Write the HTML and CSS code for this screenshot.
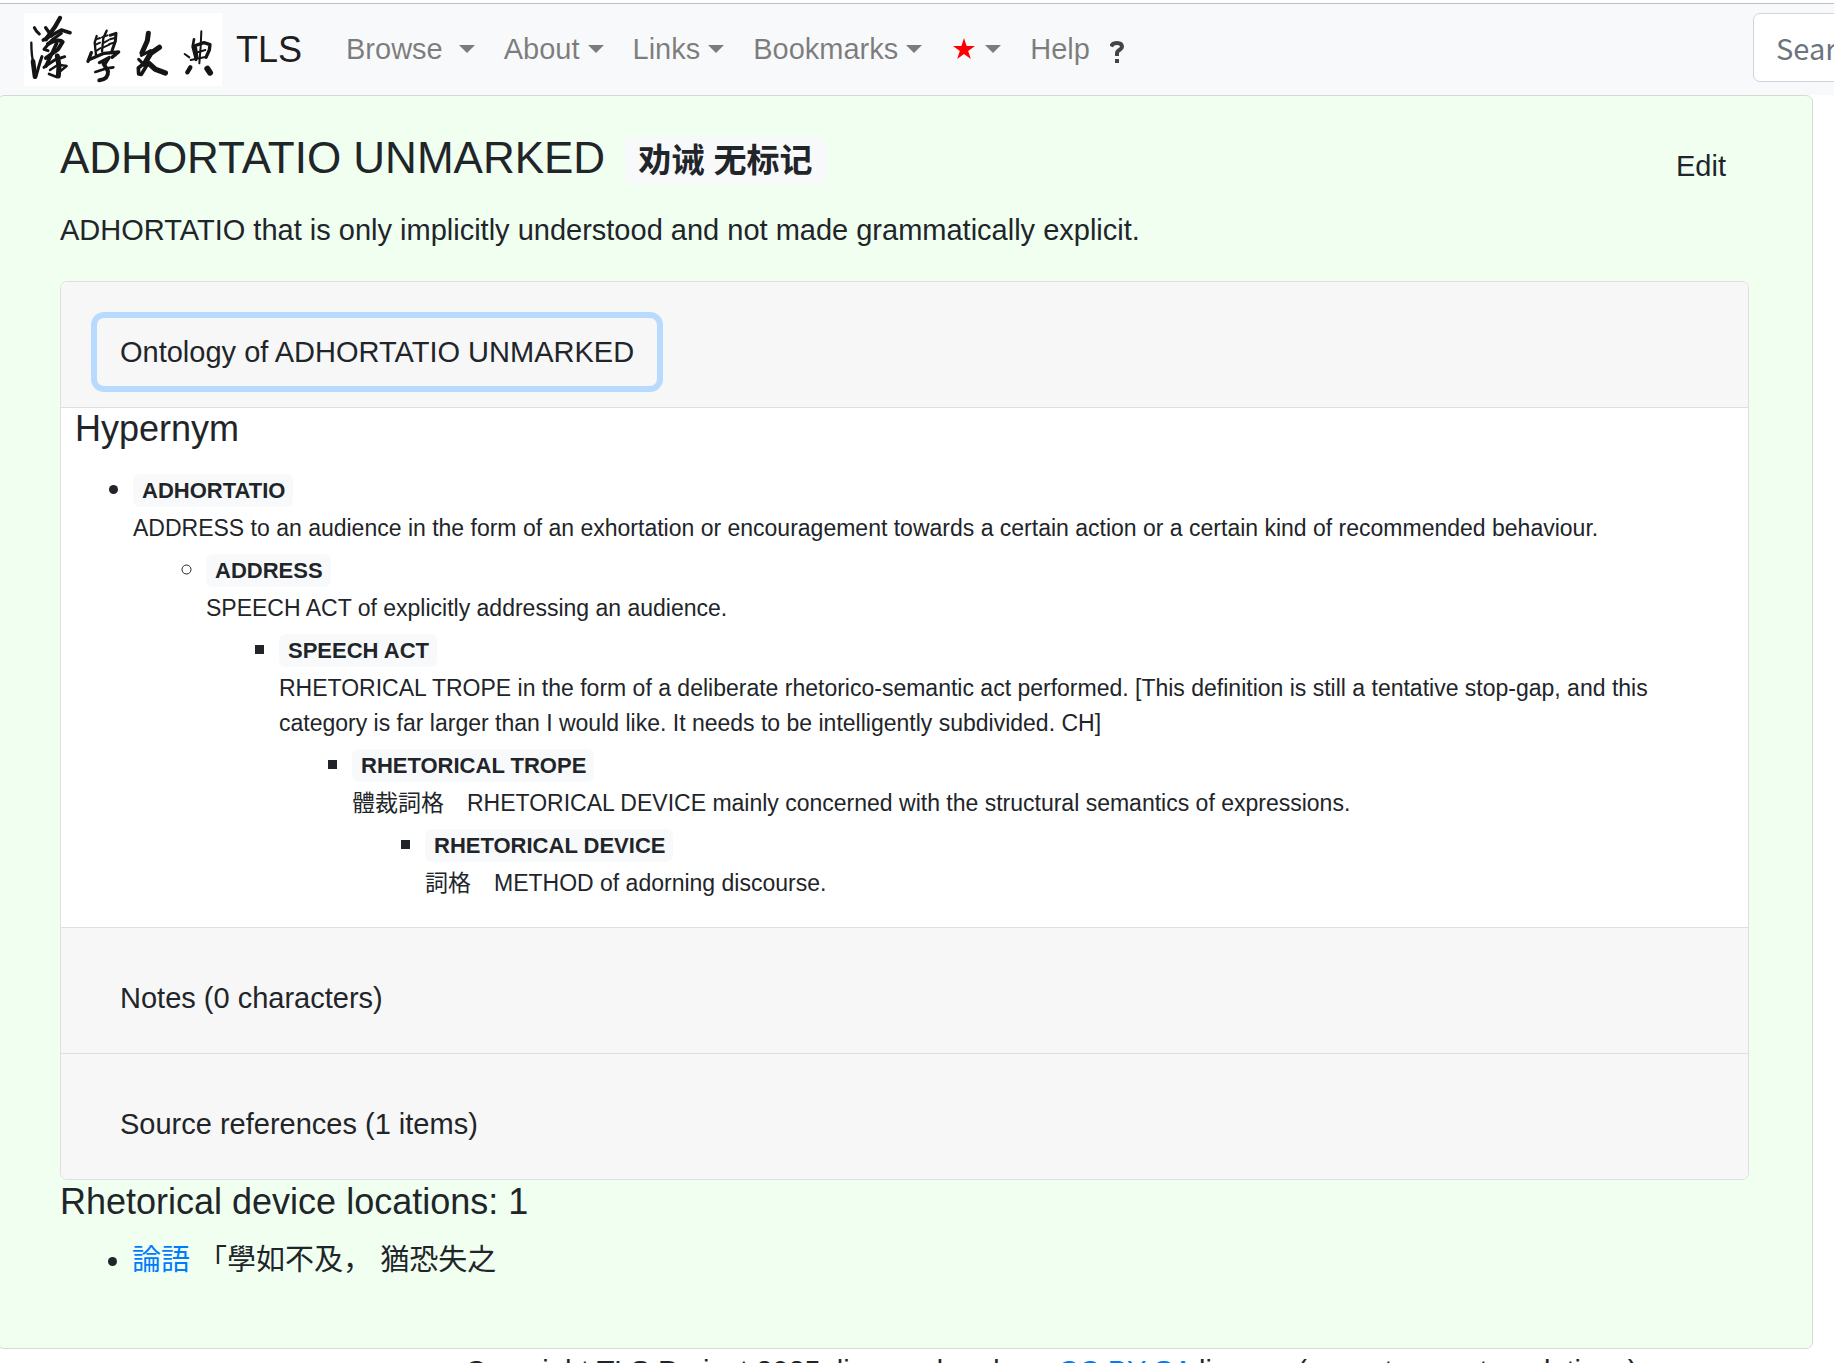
FILE: index.html
```
<!DOCTYPE html>
<html lang="en">
<head>
    <meta charset="UTF-8">
    <meta name="viewport" content="width=device-width, initial-scale=1.0">
    <title>TLS - ADHORTATIO UNMARKED</title>
    <link rel="stylesheet" href="styles.css">
</head>
<body>
    <nav class="navbar">
        <a class="navbar-brand" href="#">
            <svg class="logo" viewBox="0 0 594 219" role="img" aria-label="TLS logo">
                <rect width="594" height="219" fill="#fff"/>
                <g transform="translate(0 -9)" fill="none" stroke="#151515" stroke-linecap="round" stroke-linejoin="round">
                    <!-- first figure -->
                    <path stroke-width="9" d="M31 53L38 64L46 72"/>
                    <path stroke-width="7" d="M22 98C22 120 24 145 29 160"/>
                    <path stroke-width="14" d="M27 154L33 200"/>
                    <path stroke-width="9" d="M35 202C42 180 46 160 54 140"/>
                    <path stroke-width="10" d="M65 53L83 78"/>
                    <path stroke-width="13" d="M108 24L92 52L66 88"/>
                    <path stroke-width="11" d="M58 90L90 72L112 60L138 68"/>
                    <path stroke-width="9" d="M112 70L84 90L60 118L72 122"/>
                    <path stroke-width="12" d="M72 102C90 90 110 88 116 96L102 118L66 144"/>
                    <path stroke-width="11" d="M98 100L84 130L66 168"/>
                    <path stroke-width="9" d="M60 172L92 150L122 140"/>
                    <path stroke-width="15" d="M100 138L105 168L103 198"/>
                    <path stroke-width="8" d="M75 192L98 201"/>
                    <path stroke-width="7" d="M78 180L102 164L128 168L106 186"/>
                    <!-- second figure -->
                    <path stroke-width="7" d="M218 78L212 98L216 136"/>
                    <path stroke-width="6" d="M216 88L228 84M215 104L228 98M218 122L230 114"/>
                    <path stroke-width="7" d="M248 62L238 84L234 124"/>
                    <path stroke-width="6" d="M234 82L250 76M240 98L254 90M238 112L256 104"/>
                    <path stroke-width="9" d="M258 76L276 70L274 94L264 122"/>
                    <path stroke-width="6" d="M258 88L272 84M256 102L270 98"/>
                    <path stroke-width="10" d="M202 128L192 154"/>
                    <path stroke-width="10" d="M198 148L240 130L284 126L264 142"/>
                    <path stroke-width="9" d="M226 158L256 142L242 164"/>
                    <path stroke-width="12" d="M238 160L252 184C253 200 246 208 226 211"/>
                    <path stroke-width="8" d="M214 186L244 176L268 172"/>
                    <!-- third figure -->
                    <path stroke-width="15" d="M373 70L370 92L354 128"/>
                    <path stroke-width="9" d="M352 136L380 122"/>
                    <path stroke-width="16" d="M406 112L380 130L361 162"/>
                    <path stroke-width="11" d="M360 160L343 174L344 192L352 193L372 160"/>
                    <path stroke-width="16" d="M374 160L394 178L424 189"/>
                    <path stroke-width="9" d="M344 148L362 166"/>
                    <!-- fourth figure -->
                    <path stroke-width="6" d="M532 64L530 110L526 160"/>
                    <path stroke-width="8" d="M510 88L506 110L516 150"/>
                    <path stroke-width="11" d="M514 114L518 142"/>
                    <path stroke-width="10" d="M510 108L540 98L558 104L556 120L546 142"/>
                    <path stroke-width="6" d="M516 128L544 120M482 132L496 142M500 150L548 140"/>
                    <path stroke-width="13" d="M499 172L490 187"/>
                    <path stroke-width="18" d="M550 176L558 188"/>
                </g>
            </svg>
            <span>TLS</span>
        </a>
        <ul class="navbar-nav">
            <li><a class="nav-link dropdown-toggle wide" href="#">Browse</a></li>
            <li><a class="nav-link dropdown-toggle" href="#">About</a></li>
            <li><a class="nav-link dropdown-toggle" href="#">Links</a></li>
            <li><a class="nav-link dropdown-toggle" href="#">Bookmarks</a></li>
            <li>
                <a class="nav-link dropdown-toggle" href="#" aria-label="Starred">
                    <svg class="star" viewBox="0 0 22 21"><path fill="#f00" d="M11 0L13.6 8H22L15.2 12.9L17.8 21L11 16L4.2 21L6.8 12.9L0 8H8.4Z"/></svg>
                </a>
            </li>
            <li>
                <a class="nav-link help" href="#">Help
                    <svg class="help-icon" viewBox="0 0 14 22"><path fill="none" stroke="#444" stroke-width="4" d="M1 5.5C2 3 4 2 7 2C10.500 2 12 3.500 12 6C12 8.500 7 9 7 12V15"/><path fill="#444" d="M5 18h4v4h-4z"/></svg>
                </a>
            </li>
        </ul>
        <form class="search-form">
            <input class="form-control" type="search" placeholder="Search" aria-label="Search">
        </form>
    </nav>

    <main class="card">
        <div class="title-row">
            <h4>ADHORTATIO UNMARKED <span class="badge title-badge" lang="zh-Hans">劝诫 无标记</span></h4>
            <button type="button" class="btn">Edit</button>
        </div>
        <p class="definition">ADHORTATIO that is only implicitly understood and not made grammatically explicit.</p>

        <div class="accordion">
            <section>
                <div class="card-header">
                    <button type="button" class="btn active">Ontology of ADHORTATIO UNMARKED</button>
                </div>
                <div class="card-body">
                    <h5>Hypernym</h5>
                    <ul class="tree">
                        <li><span class="badge">ADHORTATIO</span>
                            <p>ADDRESS to an audience in the form of an exhortation or encouragement towards a certain action or a certain kind of recommended behaviour.</p>
                            <ul>
                                <li><span class="badge">ADDRESS</span>
                                    <p>SPEECH ACT of explicitly addressing an audience.</p>
                                    <ul>
                                        <li><span class="badge">SPEECH ACT</span>
                                            <p>RHETORICAL TROPE in the form of a deliberate rhetorico-semantic act performed. [This definition is still a tentative stop-gap, and this category is far larger than I would like. It needs to be intelligently subdivided. CH]</p>
                                            <ul>
                                                <li><span class="badge">RHETORICAL TROPE</span>
                                                    <p>體裁詞格　RHETORICAL DEVICE mainly concerned with the structural semantics of expressions.</p>
                                                    <ul>
                                                        <li><span class="badge">RHETORICAL DEVICE</span>
                                                            <p>詞格　METHOD of adorning discourse.</p>
                                                        </li>
                                                    </ul>
                                                </li>
                                            </ul>
                                        </li>
                                    </ul>
                                </li>
                            </ul>
                        </li>
                    </ul>
                </div>
            </section>
            <section>
                <div class="card-header">
                    <button type="button" class="btn">Notes (0 characters)</button>
                </div>
            </section>
            <section>
                <div class="card-header">
                    <button type="button" class="btn">Source references (1 items)</button>
                </div>
            </section>
        </div>

        <h5>Rhetorical device locations: 1</h5>
        <ul class="locations">
            <li><a href="#">論語</a> 「學如不及， 猶恐失之</li>
        </ul>
    </main>

    <footer class="footer">
        Copyright TLS Project 2025, licensed under a <a href="#">CC BY SA</a> license (except some translations)
    </footer>
</body>
</html>
```

FILE: styles.css
```
* {
    box-sizing: border-box;
}

body {
    margin: 0;
    border-top: 3px solid #fff;
    font-family: "Liberation Sans", "Noto Sans CJK JP", sans-serif;
    font-size: 29px;
    line-height: 44px;
    color: #212529;
    background: #fff;
    overflow-x: hidden;
}

h4, h5, p, ul {
    margin: 0;
    padding: 0;
}

h4, h5 {
    font-weight: 400;
}

h4 {
    font-size: 44px;
    line-height: 52px;
}

h5 {
    font-size: 36px;
    line-height: 44px;
    margin-bottom: 14px;
}

a {
    color: #007bff;
    text-decoration: none;
}

/* navbar */
.navbar {
    display: flex;
    align-items: center;
    padding: 9px 0 9px 24px;
    border-top: 1px solid #c0c0c0;
    background: #f8f9fa;
    overflow: hidden;
}

.navbar-brand {
    display: flex;
    align-items: center;
    gap: 14px;
    margin-right: 30px;
    font-size: 36px;
    color: rgba(0, 0, 0, 0.9);
}

.logo {
    width: 198px;
    height: 73px;
}

.navbar-nav {
    display: flex;
    list-style: none;
}

.nav-link {
    display: flex;
    align-items: center;
    gap: 8px;
    height: 71px;
    padding: 0 15px 2px 14px;
    color: rgba(0, 0, 0, 0.5);
}

.dropdown-toggle::after {
    content: "";
    border-top: 8px solid;
    border-left: 8px solid transparent;
    border-right: 8px solid transparent;
}

.wide {
    gap: 16px;
}

.star {
    width: 22px;
    height: 21px;
    margin: 0 2px;
}

.help {
    gap: 20px;
}

.help-icon {
    width: 14px;
    height: 22px;
    margin-top: 6px;
}

.search-form {
    flex: none;
    align-self: flex-start;
    width: 300px;
    margin-left: auto;
    margin-right: -219px;
}

.form-control {
    display: block;
    width: 100%;
    height: 69px;
    padding: 10px 22px 12px;
    border: 1px solid #ced4da;
    border-radius: 7px;
    background: #fff;
    font-family: "Noto Sans CJK JP", sans-serif;
    font-size: 29px;
}

.form-control::placeholder {
    color: #6c757d;
}

/* main card */
.card {
    margin: 0 21px 0 -3px;
    padding: 36px 63px 66px 62px;
    border: 1px solid #cfdfcf;
    border-radius: 7px;
    background: #f0fff0;
}

.title-row {
    display: flex;
    justify-content: space-between;
    align-items: flex-start;
    margin-bottom: 8px;
}

.badge {
    display: inline-block;
    padding: 5px 8px 5px 9px;
    border-radius: 7px;
    background: #f8f9fa;
    font-size: 22px;
    font-weight: 700;
    line-height: 23px;
    vertical-align: middle;
}

.title-badge {
    margin-left: 8px;
    padding: 8px 13px;
    font-size: 33px;
    line-height: 32px;
}

.btn {
    padding: 11px 22px;
    border: 1px solid transparent;
    border-radius: 7px;
    background: transparent;
    color: #212529;
    font-family: inherit;
    font-size: 29px;
    line-height: 44px;
    cursor: pointer;
}

.btn.active {
    box-shadow: 0 0 0 6px #b8daff;
}

.definition {
    margin-bottom: 29px;
}

/* accordion */
.accordion {
    border: 1px solid #dfdfdf;
    border-radius: 7px;
    background: #fff;
    overflow: hidden;
}

.accordion section + section {
    border-top: 1px solid #dfdfdf;
}

.card-header {
    display: flex;
    padding: 36px 36px 21px;
    background: #f7f7f7;
}

.card-body {
    padding-bottom: 26px;
    border-top: 1px solid #dfdfdf;
}

.card-body h5 {
    margin-left: 14px;
    line-height: 42px;
    margin-bottom: 16px;
}

.tree,
.locations {
    padding-left: 72px;
}

.tree {
    padding-right: 36px;
}

.tree ul {
    padding-left: 73px;
}

.tree p {
    padding-top: 1px;
    font-size: 23px;
    line-height: 35px;
}

.locations {
    list-style: disc;
}

.footer {
    padding-left: 465px;
    white-space: nowrap;
}
```
